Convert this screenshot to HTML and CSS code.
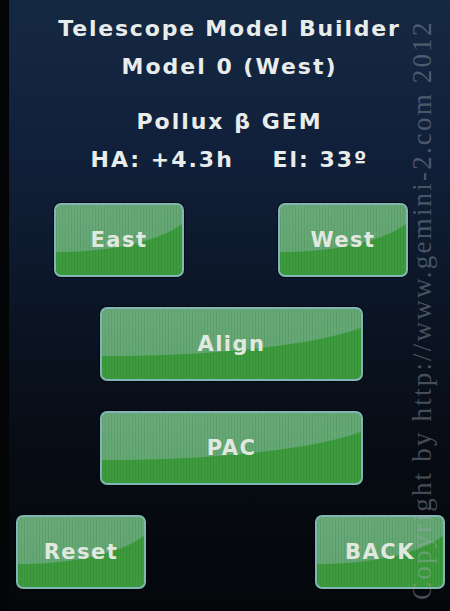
FILE: index.html
```html
<!DOCTYPE html>
<html>
<head>
<meta charset="utf-8">
<link rel="stylesheet" href="styles.css">
</head>
<body>
<div class="screen">
  <div class="header">
    <div class="line title">Telescope Model Builder</div>
    <div class="line">Model 0 (West)</div>
    <div class="line star">Pollux β GEM</div>
    <div class="line">HA: +4.3h&nbsp;&nbsp;&nbsp;&nbsp;El: 33º</div>
  </div>
  <div class="buttons">
    <div class="row row-top">
      <div class="btn btn-small">East</div>
      <div class="btn btn-small">West</div>
    </div>
    <div class="row row-mid">
      <div class="btn btn-wide">Align</div>
    </div>
    <div class="row row-mid">
      <div class="btn btn-wide">PAC</div>
    </div>
    <div class="row row-bottom">
      <div class="btn btn-small">Reset</div>
      <div class="btn btn-small">BACK</div>
    </div>
  </div>
  <div class="watermark">Copyright by http://www.gemini-2.com 2012</div>
</div>
</body>
</html>
```

FILE: styles.css
```css
html, body {
  margin: 0;
  padding: 0;
  background: #040608;
}

.screen {
  position: relative;
  width: 441px;
  height: 611px;
  overflow: hidden;
  border-left: 9px solid #030405;
  background: linear-gradient(to bottom, #152842 0%, #11203a 25%, #0b1525 50%, #070c14 75%, #04070a 100%);
  font-family: "DejaVu Sans", Verdana, sans-serif;
  font-weight: bold;
  color: #e8eceb;
}

.header {
  padding-top: 10px;
  text-align: center;
  font-size: 22px;
  letter-spacing: 2px;
}

.title {
  letter-spacing: 1.8px;
}

.line {
  line-height: 38px;
  height: 38px;
}

.star {
  margin-top: 17px;
}

.buttons {
  margin-top: 24px;
  display: flex;
  flex-direction: column;
  gap: 30px;
}

.row {
  display: flex;
  height: 74px;
}

.row-top {
  justify-content: space-between;
  padding: 0 42px 0 45px;
}

.row-mid {
  padding-left: 91px;
}

.row-bottom {
  justify-content: space-between;
  padding: 0 5px 0 7px;
}

.btn {
  box-sizing: border-box;
  height: 74px;
  border: 2px solid #80b7b6;
  border-radius: 7px;
  box-shadow: 0 0 0 1px rgba(0, 0, 0, 0.6);
  background:
    repeating-linear-gradient(90deg, rgba(0, 0, 0, 0.07) 0 1px, transparent 1px 3px),
    radial-gradient(ellipse 110% 68% at 0% 0%, #6aaa7a 0%, #64a873 98%, rgba(100, 168, 115, 0) 100%),
    #3c9b3d;
  display: flex;
  align-items: center;
  justify-content: center;
  font-size: 21px;
  letter-spacing: 1.5px;
  color: #e0e8df;
}

.btn-small {
  width: 130px;
}

.btn-wide {
  width: 263px;
}

.watermark {
  position: absolute;
  left: 400px;
  top: 600px;
  width: 600px;
  transform-origin: 0 0;
  transform: rotate(-90deg);
  font-family: "Liberation Serif", "Times New Roman", serif;
  font-weight: normal;
  font-size: 27px;
  line-height: 27px;
  letter-spacing: 2.2px;
  white-space: nowrap;
  color: rgba(160, 170, 180, 0.42);
}
```
